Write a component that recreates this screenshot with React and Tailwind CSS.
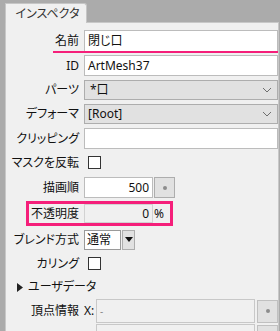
import React from "react";

const Label = ({ children, className = "" }) => (
  <div className={"w-[74px] shrink-0 text-right pr-[1px] " + className}>{children}</div>
);

const Dot = () => <div className="w-[4px] h-[4px] rounded-full bg-[#8c8c8c]" />;

const Chevron = () => (
  <svg width="10" height="6" viewBox="0 0 10 6" className="shrink-0">
    <polyline points="1,1 5,5 9,1" fill="none" stroke="#6e6e6e" strokeWidth="1" />
  </svg>
);

const Check = () => (
  <div className="ml-[4px] w-[13px] h-[13px] bg-white border border-[#333]" />
);

export default function App() {
  return (
    <div
      className="w-[280px] h-[331px] bg-[#ababab] overflow-hidden flex flex-col text-[12px] text-[#111] [font-feature-settings:'palt']"
      style={{ fontFamily: "'Noto Sans', 'Noto Sans CJK JP', sans-serif" }}
    >
      <div className="h-[22px] flex items-end shrink-0">
        <div className="ml-[5px] w-[82px] h-[20px] -mb-px relative z-10 bg-[#f0f0f0] border border-b-0 border-[#c6c6c6] rounded-tr-[3px] flex items-center justify-center text-[#333] leading-none pl-[3px]">
          インスペクタ
        </div>
      </div>
      <div className="ml-[5px] mr-[1px] flex-1 bg-[#f0f0f0] border-l border-t border-r border-[#c8c8c8] pt-[7px] flex flex-col leading-none">
        {/* 名前 */}
        <div className="relative flex items-center h-[22px] gap-[4px]">
          <Label>名前</Label>
          <div className="flex-1 h-full bg-white border border-[#bcbcbc] flex items-center pl-[3px]">閉じ口</div>
          <div className="absolute left-[47px] right-0 bottom-[-1px] h-[2px] bg-[#f51f7a]" />
        </div>
        {/* ID */}
        <div className="mt-[3px] flex items-center h-[21px] gap-[4px]">
          <Label>ID</Label>
          <div className="flex-1 h-full bg-white border border-[#bcbcbc] flex items-center pl-[3px]">ArtMesh37</div>
        </div>
        {/* パーツ */}
        <div className="mt-[4px] flex items-center h-[20px] gap-[4px]">
          <Label>パーツ</Label>
          <div className="flex-1 h-full bg-[#e1e1e1] border border-[#adadad] flex items-center pl-[5px] pr-[5px] justify-between">
            <span>*口</span>
            <Chevron />
          </div>
        </div>
        {/* デフォーマ */}
        <div className="mt-[4px] flex items-center h-[20px] gap-[4px]">
          <Label>デフォーマ</Label>
          <div className="flex-1 h-full bg-[#e1e1e1] border border-[#adadad] flex items-center pl-[3px] pr-[5px] justify-between">
            <span>[Root]</span>
            <Chevron />
          </div>
        </div>
        {/* クリッピング */}
        <div className="mt-[4px] flex items-center h-[21px] gap-[4px]">
          <Label>クリッピング</Label>
          <div className="flex-1 h-full bg-white border border-[#bcbcbc]" />
        </div>
        {/* マスクを反転 */}
        <div className="mt-[3px] flex items-center h-[21px] gap-[4px]">
          <Label>マスクを反転</Label>
          <Check />
        </div>
        {/* 描画順 */}
        <div className="mt-[4px] flex items-center h-[21px] gap-[4px]">
          <Label>描画順</Label>
          <div className="w-[69px] h-full bg-white border border-[#bcbcbc] flex items-center justify-end pr-[3px]">500</div>
          <div className="-ml-[3px] w-[21px] h-full bg-[#e1e1e1] border border-[#adadad] flex items-center justify-center">
            <Dot />
          </div>
        </div>
        {/* 不透明度 */}
        <div className="mt-[3px] relative flex items-center h-[25px] gap-[4px]">
          <Label>不透明度</Label>
          <div className="w-[69px] h-[19px] bg-[#f0f0f0] border border-[#d2d2d2] flex items-center justify-end pr-[3px]">0</div>
          <span className="-ml-[3px]">%</span>
          <div className="absolute left-[20px] w-[147px] top-0 h-[25px] border-[3px] border-[#f51f7a]" />
        </div>
        {/* ブレンド方式 */}
        <div className="mt-[3px] flex items-center h-[21px] gap-[4px]">
          <Label>ブレンド方式</Label>
          <div className="w-[37px] h-[20px] bg-white border border-[#9a9a9a] flex items-center pl-[2px]">通常</div>
          <div className="-ml-[3px] w-[13px] h-[20px] bg-[#e1e1e1] border border-[#adadad] flex items-center justify-center">
            <svg width="8" height="5" viewBox="0 0 8 5"><polygon points="0,0 8,0 4,5" fill="#111" /></svg>
          </div>
        </div>
        {/* カリング */}
        <div className="mt-[3px] flex items-center h-[21px] gap-[4px]">
          <Label>カリング</Label>
          <Check />
        </div>
        {/* ユーザデータ */}
        <div className="mt-[3px] flex items-center h-[20px] pl-[11px] gap-[5px]">
          <svg width="6" height="9" viewBox="0 0 6 9"><polygon points="0,0 6,4.5 0,9" fill="#222" /></svg>
          <span>ユーザデータ</span>
        </div>
        {/* 頂点情報 */}
        <div className="mt-[2px] flex items-center h-[24px] gap-[4px]">
          <Label className="pr-0">頂点情報</Label>
          <span className="w-[11px] shrink-0">X:</span>
          <div className="w-[159px] -ml-[3px] h-full bg-[#f0f0f0] border border-[#c8c8c8] flex items-center pl-[3px] text-[#888] text-[10px]">-</div>
          <div className="-ml-[2px] w-[21px] h-[23px] bg-[#e1e1e1] border border-[#c0c0c0] flex items-center justify-center">
            <Dot />
          </div>
        </div>
        <div className="mt-[1px] flex items-center h-[24px] gap-[4px]">
          <div className="w-[74px] shrink-0" />
          <span className="w-[11px] shrink-0" />
          <div className="w-[159px] -ml-[3px] h-full bg-[#f0f0f0] border border-[#c8c8c8]" />
          <div className="-ml-[2px] w-[21px] h-[23px] bg-[#e1e1e1] border border-[#c0c0c0]" />
        </div>
      </div>
    </div>
  );
}
